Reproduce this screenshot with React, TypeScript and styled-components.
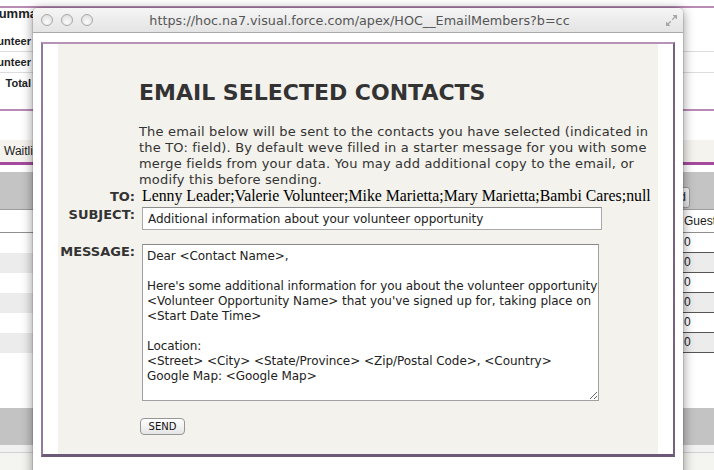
import React from 'react';
import styled, { createGlobalStyle } from 'styled-components';

const GlobalStyle = createGlobalStyle`
  html, body {
    margin: 0;
    padding: 0;
    background: #fff;
  }
  body {
    width: 714px;
    height: 470px;
    overflow: hidden;
    font-family: "DejaVu Sans", Verdana, sans-serif;
  }
`;

const Screen = styled.div`
  position: relative;
  width: 714px;
  height: 470px;
  overflow: hidden;
  background: #fff;
`;

/* ---------- the page behind the popup ---------- */

const Backdrop = styled.div`
  display: flex;
  flex-direction: column;
  width: 714px;
  height: 470px;
  font-family: "Liberation Sans", Arial, sans-serif;
`;

const Rule = styled.div<{ $top: number; $h: number; $color: string }>`
  margin-top: ${({ $top }) => $top}px;
  height: ${({ $h }) => $h}px;
  background: ${({ $color }) => $color};
  flex-shrink: 0;
`;

const SummaryTitle = styled.div`
  height: 23px;
  line-height: 12px;
  font-size: 13px;
  font-weight: bold;
  color: #222;
  text-indent: -10px;
  white-space: nowrap;
  flex-shrink: 0;
`;

const SummaryRow = styled.div<{ $last?: boolean }>`
  height: 20px;
  display: flex;
  border-bottom: 1px solid ${({ $last }) => ($last ? 'transparent' : '#dcdcdc')};
  flex-shrink: 0;
`;

const SummaryLabel = styled.div`
  width: 31px;
  display: flex;
  justify-content: flex-end;
  white-space: nowrap;
  font-size: 11px;
  font-weight: bold;
  line-height: 20px;
  color: #222;
`;

const TabStrip = styled.div`
  margin-top: 29px;
  height: 22px;
  background: #f4f3ee;
  padding-left: 4px;
  font-size: 12px;
  line-height: 22px;
  color: #1c1c1c;
  flex-shrink: 0;
`;

const Toolbar = styled.div`
  margin-top: 7px;
  height: 36px;
  background: #c4c4c4;
  border-bottom: 1px solid #9c9c9c;
  display: flex;
  justify-content: flex-end;
  align-items: flex-end;
  padding: 0 24px 1px 0;
  box-sizing: content-box;
  flex-shrink: 0;
`;

const ToolButton = styled.div`
  height: 19px;
  padding: 0 3px;
  border: 1px solid #9a9a9a;
  border-radius: 3px;
  background: linear-gradient(#fafafa, #e4e4e4);
  font-size: 12px;
  line-height: 19px;
  color: #222;
  white-space: nowrap;
`;

const TableRow = styled.div<{ $shade?: boolean; $h: number }>`
  height: ${({ $h }) => $h}px;
  display: flex;
  justify-content: flex-end;
  background: ${({ $shade }) => ($shade ? '#ececec' : '#fff')};
  flex-shrink: 0;
`;

const HeaderRow = styled(TableRow)`
  border-bottom: 1px solid #8f8f8f;
`;

const EdgeCell = styled.div<{ $lined?: boolean }>`
  width: 30px;
  padding-left: 1px;
  font-size: 12px;
  line-height: ${({ $lined }) => ($lined ? '19px' : '22px')};
  color: #1a1a1a;
  border-bottom: ${({ $lined }) => ($lined ? '1px solid #555' : 'none')};
  white-space: nowrap;
`;

const FooterBand = styled.div`
  margin-top: 55px;
  height: 37px;
  background: #c3c3c3;
  flex-shrink: 0;
`;

const FooterStrip = styled.div`
  height: 7px;
  background: #f1f1f1;
  border-bottom: 1px solid #d2d2d2;
  flex-shrink: 0;
`;

const FooterRest = styled.div`
  flex: 1;
  background: #f4f4f0;
`;

/* ---------- popup window ---------- */

const Window = styled.div`
  position: absolute;
  left: 33px;
  top: 8px;
  width: 650px;
  height: 480px;
  background: #fff;
  border-radius: 5px 5px 0 0;
  box-shadow: 0 2px 12px rgba(0, 0, 0, 0.45), 0 0 0 1px rgba(0, 0, 0, 0.1);
  display: flex;
  flex-direction: column;
`;

const TitleBar = styled.div`
  height: 24px;
  display: grid;
  grid-template-columns: 1fr auto 1fr;
  align-items: center;
  padding: 0 5px 0 8px;
  background: linear-gradient(#f5f5f5, #e4e4e4);
  border-bottom: 1px solid #a9a9a9;
  border-radius: 5px 5px 0 0;
`;

const Lights = styled.div`
  display: flex;
  gap: 8px;
`;

const Light = styled.span`
  width: 10px;
  height: 10px;
  border-radius: 50%;
  border: 1px solid #a8a8a8;
  background: radial-gradient(circle at 50% 70%, #fbfbfb, #d9d9d9);
`;

const Address = styled.div`
  font-size: 12.75px;
  color: #555;
  white-space: nowrap;
`;

const Resize = styled.svg`
  justify-self: end;
  display: block;
`;

const WindowBody = styled.div`
  flex: 1;
  padding: 9px 8px 0 8px;
`;

const Frame = styled.div`
  display: flex;
  padding: 0 15px;
  background: #fff;
  border-style: solid;
  border-width: 2px 2px 3px 2px;
  border-color: #b592b6 #76627f #6c5878 #8f7c9c;
`;

const Panel = styled.div`
  flex: 1;
  background: #f3f2ec;
  padding: 36px 0 19px 0;
  color: #333;
`;

const Heading = styled.h1`
  margin: 0 0 0 81px;
  font-size: 22px;
  line-height: 26px;
  font-weight: bold;
  color: #333;
`;

const Intro = styled.p`
  margin: 18px 0 0 81px;
  font-size: 13px;
  line-height: 16px;
  letter-spacing: 0.18px;
  color: #333;
`;

const FieldRow = styled.div<{ $gap: number; $baseline?: boolean }>`
  display: grid;
  grid-template-columns: 77px 1fr;
  column-gap: 7px;
  margin-top: ${({ $gap }) => $gap}px;
  align-items: ${({ $baseline }) => ($baseline ? 'baseline' : 'start')};
`;

const Label = styled.label`
  text-align: right;
  font-size: 13px;
  font-weight: bold;
  line-height: 16px;
  color: #333;
`;

const Recipients = styled.div`
  font-family: "Liberation Serif", "Times New Roman", serif;
  font-size: 15.8px;
  line-height: 16px;
  color: #000;
  white-space: nowrap;
`;

const TextInput = styled.input`
  box-sizing: border-box;
  width: 460px;
  height: 23px;
  margin: 0;
  padding: 0 5px;
  border: 1px solid #a8a8a8;
  border-top-color: #8c8c8c;
  background: #fff;
  font-family: "DejaVu Sans", sans-serif;
  font-size: 12px;
  letter-spacing: -0.04px;
  color: #222;
  outline: none;
`;

const MessageBox = styled.textarea`
  box-sizing: border-box;
  width: 457px;
  height: 157px;
  margin: 0;
  padding: 4px;
  border: 1px solid #a0a0a0;
  border-top-color: #888;
  background: #fff;
  font-family: "DejaVu Sans", sans-serif;
  font-size: 12px;
  line-height: 15px;
  letter-spacing: -0.05px;
  color: #222;
  white-space: pre;
  overflow: hidden;
  resize: both;
  outline: none;
`;

const SendButton = styled.button`
  grid-column: 2;
  justify-self: start;
  margin-left: -2px;
  width: 45px;
  height: 17px;
  padding: 0;
  border: 1px solid #969696;
  border-radius: 4px;
  background: linear-gradient(#ffffff, #e5e5e5);
  font-family: "DejaVu Sans", sans-serif;
  font-size: 10px;
  line-height: 15px;
  color: #111;
`;

const message = `Dear <Contact Name>,

Here's some additional information for you about the volunteer opportunity
<Volunteer Opportunity Name> that you've signed up for, taking place on
<Start Date Time>

Location:
<Street> <City> <State/Province> <Zip/Postal Code>, <Country>
Google Map: <Google Map>`;

const rows = [0, 1, 2, 3, 4, 5];

export default function App() {
  return (
    <Screen>
      <GlobalStyle />
      <Backdrop>
        <Rule $top={6} $h={2} $color="#b88ab4" />
        <SummaryTitle>Summary</SummaryTitle>
        <SummaryRow>
          <SummaryLabel>Volunteer</SummaryLabel>
        </SummaryRow>
        <SummaryRow>
          <SummaryLabel>Volunteer</SummaryLabel>
        </SummaryRow>
        <SummaryRow $last>
          <SummaryLabel>Total</SummaryLabel>
        </SummaryRow>
        <Rule $top={15} $h={2} $color="#b98ab5" />
        <TabStrip>Waitlist</TabStrip>
        <Rule $top={0} $h={3} $color="#a54a9d" />
        <Toolbar>
          <ToolButton>Mass Add</ToolButton>
        </Toolbar>
        <HeaderRow $h={22}>
          <EdgeCell>Guest</EdgeCell>
        </HeaderRow>
        {rows.map(i => (
          <TableRow key={i} $h={20} $shade={i % 2 === 1}>
            <EdgeCell $lined>0</EdgeCell>
          </TableRow>
        ))}
        <FooterBand />
        <FooterStrip />
        <FooterRest />
      </Backdrop>

      <Window>
        <TitleBar>
          <Lights>
            <Light />
            <Light />
            <Light />
          </Lights>
          <Address>https://hoc.na7.visual.force.com/apex/HOC__EmailMembers?b=cc</Address>
          <Resize width="13" height="13" viewBox="0 0 13 13">
            <path d="M7.2 5.8 L10.6 2.4" stroke="#a6a6a6" strokeWidth="1.3" />
            <path d="M7.5 1 H12 V5.5 Z" fill="#a6a6a6" />
            <path d="M5.8 7.2 L2.4 10.6" stroke="#a6a6a6" strokeWidth="1.3" />
            <path d="M1 7.5 V12 H5.5 Z" fill="#a6a6a6" />
          </Resize>
        </TitleBar>
        <WindowBody>
          <Frame>
            <Panel>
              <Heading>EMAIL SELECTED CONTACTS</Heading>
              <Intro>
                The email below will be sent to the contacts you have selected (indicated in
                the TO: field). By default weve filled in a starter message for you with some
                merge fields from your data. You may add additional copy to the email, or
                modify this before sending.
              </Intro>
              <FieldRow $gap={0} $baseline>
                <Label>TO:</Label>
                <Recipients>
                  Lenny Leader;Valerie Volunteer;Mike Marietta;Mary Marietta;Bambi Cares;null
                </Recipients>
              </FieldRow>
              <FieldRow $gap={2}>
                <Label htmlFor="subject">SUBJECT:</Label>
                <TextInput
                  id="subject"
                  type="text"
                  defaultValue="Additional information about your volunteer opportunity"
                />
              </FieldRow>
              <FieldRow $gap={14}>
                <Label htmlFor="message">MESSAGE:</Label>
                <MessageBox id="message" wrap="off" defaultValue={message} />
              </FieldRow>
              <FieldRow $gap={17}>
                <SendButton type="button">SEND</SendButton>
              </FieldRow>
            </Panel>
          </Frame>
        </WindowBody>
      </Window>
    </Screen>
  );
}
